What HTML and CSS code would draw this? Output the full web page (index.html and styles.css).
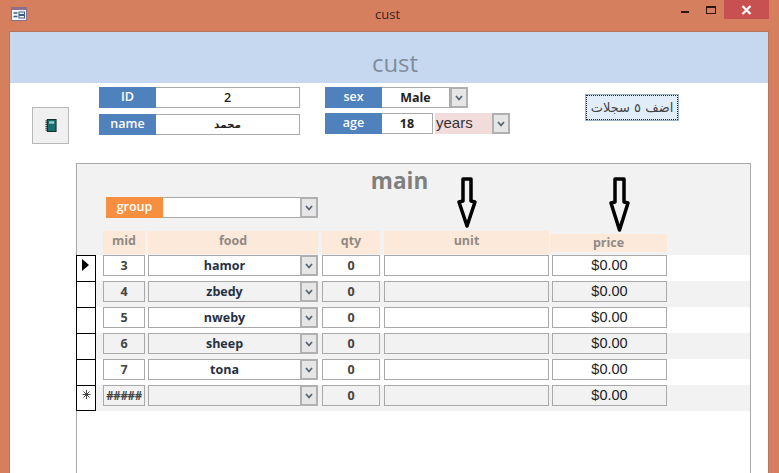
FILE: index.html
```html
<!DOCTYPE html>
<html lang="en">
<head>
<meta charset="utf-8">
<title>cust</title>
<link rel="stylesheet" href="styles.css">
</head>
<body>
<svg class="defs" width="0" height="0" aria-hidden="true">
  <symbol id="chev" viewBox="0 0 10 8"><path d="M2 2 5 5.500 8 2" fill="none" stroke="#566270" stroke-width="1.700"/></symbol>
</svg>
<div class="window">
  <div class="titlebar">
    <div class="title-left">
      <svg class="app-icon" width="16" height="14" viewBox="0 0 16 14">
        <rect x="0.5" y="0.5" width="15" height="13" fill="#f4f6fb" stroke="#8a6f86"/>
        <rect x="1" y="1" width="14" height="2" fill="#8f6f95"/>
        <path d="M2.5 6H6.5M2.5 9.5H6.5" stroke="#3c5d8f" stroke-width="1.3"/>
        <rect x="8" y="5" width="5.500" height="2.500" fill="none" stroke="#3c5d8f"/>
        <rect x="8" y="8.500" width="5.500" height="2.500" fill="none" stroke="#3c5d8f"/>
      </svg>
    </div>
    <div class="title-text">cust</div>
    <div class="title-right">
      <span class="ctl-min"></span>
      <span class="ctl-max"></span>
      <span class="ctl-close">
        <svg width="11" height="10" viewBox="0 0 11 10"><path d="M1.500 1 9.500 9M9.500 1 1.500 9" stroke="#fff" stroke-width="2.200"/></svg>
      </span>
    </div>
  </div>

  <div class="form">
    <div class="form-header">cust</div>
    <div class="form-top">
      <button class="icon-btn" type="button" aria-label="book">
        <svg width="12" height="13" viewBox="0 0 13 14">
          <rect x="2.500" y="0.500" width="9.500" height="13" fill="#17706e" stroke="#0d2326"/>
          <rect x="4.500" y="2.500" width="5.500" height="2.500" fill="#9fd0cc"/>
          <path d="M0.500 2H3M0.500 4H3M0.500 6H3M0.500 8H3M0.500 10H3M0.500 12H3" stroke="#222" stroke-width="1"/>
        </svg>
      </button>
      <div class="pair-col col-a">
        <div class="pair"><span class="lbl lbl-w">ID</span><span class="val val-id">2</span></div>
        <div class="pair"><span class="lbl lbl-w">name</span><span class="val val-id val-ar" dir="rtl">محمد</span></div>
      </div>
      <div class="pair-col col-b">
        <div class="pair">
          <span class="lbl lbl-w">sex</span>
          <span class="val val-sex">Male</span>
          <span class="chev-box"><svg width="10" height="8"><use href="#chev"/></svg></span>
        </div>
        <div class="pair">
          <span class="lbl lbl-w">age</span>
          <span class="val val-age">18</span>
          <span class="val-years">years</span>
          <span class="chev-box"><svg width="10" height="8"><use href="#chev"/></svg></span>
        </div>
      </div>
      <button class="action-btn" type="button" dir="rtl">اضف ٥ سجلات</button>
    </div>

    <div class="subform">
      <svg class="arrow arrow-a" width="24" height="56" viewBox="0 0 24 56">
        <path d="M8 4H16V26L20 27 12 51 4 27 8 26Z" fill="none" stroke="#000" stroke-width="3.500" stroke-linejoin="round"/>
      </svg>
      <svg class="arrow arrow-b" width="26" height="60" viewBox="0 0 26 60">
        <path d="M8 4H17V27L21 28 12.500 55 4 28 8 27Z" fill="none" stroke="#000" stroke-width="3.500" stroke-linejoin="round"/>
      </svg>
      <div class="sub-head">
        <div class="sub-title">main</div>
        <div class="group-row">
          <span class="group-lbl">group</span>
          <span class="group-val"></span>
          <span class="chev-box"><svg width="10" height="8"><use href="#chev"/></svg></span>
        </div>
        <div class="col-heads">
          <span class="spacer"></span>
          <span class="head c-mid">mid</span>
          <span class="head c-food">food</span>
          <span class="head c-qty">qty</span>
          <span class="head c-unit">unit</span>
          <span class="head c-price head-price">price</span>
        </div>
      </div>

      <div class="row">
        <span class="sel"><span class="tri"></span></span>
        <span class="cell c-mid">3</span>
        <span class="combo c-food"><span class="combo-text">hamor</span><span class="chev-box"><svg width="10" height="8"><use href="#chev"/></svg></span></span>
        <span class="cell c-qty">0</span>
        <span class="cell c-unit"></span>
        <span class="cell c-price money">$0.00</span>
      </div>
      <div class="row alt">
        <span class="sel"></span>
        <span class="cell c-mid">4</span>
        <span class="combo c-food"><span class="combo-text">zbedy</span><span class="chev-box"><svg width="10" height="8"><use href="#chev"/></svg></span></span>
        <span class="cell c-qty">0</span>
        <span class="cell c-unit"></span>
        <span class="cell c-price money">$0.00</span>
      </div>
      <div class="row">
        <span class="sel"></span>
        <span class="cell c-mid">5</span>
        <span class="combo c-food"><span class="combo-text">nweby</span><span class="chev-box"><svg width="10" height="8"><use href="#chev"/></svg></span></span>
        <span class="cell c-qty">0</span>
        <span class="cell c-unit"></span>
        <span class="cell c-price money">$0.00</span>
      </div>
      <div class="row alt">
        <span class="sel"></span>
        <span class="cell c-mid">6</span>
        <span class="combo c-food"><span class="combo-text">sheep</span><span class="chev-box"><svg width="10" height="8"><use href="#chev"/></svg></span></span>
        <span class="cell c-qty">0</span>
        <span class="cell c-unit"></span>
        <span class="cell c-price money">$0.00</span>
      </div>
      <div class="row">
        <span class="sel"></span>
        <span class="cell c-mid">7</span>
        <span class="combo c-food"><span class="combo-text">tona</span><span class="chev-box"><svg width="10" height="8"><use href="#chev"/></svg></span></span>
        <span class="cell c-qty">0</span>
        <span class="cell c-unit"></span>
        <span class="cell c-price money">$0.00</span>
      </div>
      <div class="row alt row-last">
        <span class="sel sel-last">
          <svg class="star" width="9" height="9" viewBox="0 0 9 9"><path d="M4.500 0V9M0.500 4.500H8.500M1.500 1.500 7.500 7.500M7.500 1.500 1.500 7.500" stroke="#333" stroke-width="0.900"/></svg>
        </span>
        <span class="cell c-mid hash">#####</span>
        <span class="combo c-food"><span class="combo-text"></span><span class="chev-box"><svg width="10" height="8"><use href="#chev"/></svg></span></span>
        <span class="cell c-qty">0</span>
        <span class="cell c-unit"></span>
        <span class="cell c-price money">$0.00</span>
      </div>
    </div>
  </div>
</div>
</body>
</html>
```
FILE: styles.css
```css
* { box-sizing: border-box; }
html, body { margin: 0; padding: 0; }
body {
  width: 779px;
  height: 473px;
  overflow: hidden;
  font-family: "Open Sans", "DejaVu Sans", sans-serif;
}
.defs { display: block; height: 0; }
.window {
  width: 779px;
  height: 473px;
  background: #d67f5f;
  display: flex;
  flex-direction: column;
  overflow: hidden;
}

/* title bar */
.titlebar {
  flex: 0 0 31px;
  display: grid;
  grid-template-columns: 1fr auto 1fr;
}
.title-left { padding: 7px 0 0 11px; }
.app-icon { display: block; }
.title-text {
  font-size: 13px;
  line-height: 17px;
  padding: 6px 4px 0 0;
  color: #38251e;
}
.title-right {
  display: flex;
  justify-content: flex-end;
  padding-right: 10px;
}
.ctl-min {
  width: 8px;
  height: 2px;
  background: #2d1710;
  margin: 11px 17px 0 0;
}
.ctl-max {
  width: 10px;
  height: 8px;
  border: 1px solid #2d1710;
  border-top-width: 2px;
  margin: 6px 8px 0 0;
}
.ctl-close {
  width: 45px;
  height: 19px;
  background: #c75050;
  display: flex;
  align-items: center;
  justify-content: center;
}

/* form */
.form {
  flex: 1;
  margin: 0 10px 0 9px;
  background: #fff;
  border: solid #b9745c;
  border-width: 1px 1px 0 1px;
  display: flex;
  flex-direction: column;
}
.form-header {
  flex: 0 0 51px;
  background: #c6d8ef;
  color: #7f8c9c;
  font-size: 24px;
  line-height: 33px;
  padding: 14px 0 0 12px;
  text-align: center;
}
.form-top {
  flex: 0 0 80px;
  display: flex;
  align-items: flex-start;
  padding: 4px 0 0 22px;
}
.icon-btn {
  width: 37px;
  height: 37px;
  margin: 20px 30px 0 0;
  padding: 0;
  background: #f0f0f0;
  border: 1px solid #b8b8b8;
  display: flex;
  align-items: center;
  justify-content: center;
}
.pair-col {
  display: flex;
  flex-direction: column;
}
.col-a { width: 201px; gap: 6px; margin-right: 25px; }
.col-b { width: 185px; gap: 5px; margin-right: 75px; }
.pair { display: flex; height: 21px; }
.lbl {
  background: #4f81bd;
  color: #fff;
  font-size: 12.5px;
  font-weight: 600;
  line-height: 20px;
  text-align: center;
  width: 57px;
  flex: none;
}
.val {
  border: 1px solid #a9a9a9;
  border-left: 0;
  background: #fff;
  color: #222;
  font-size: 12.5px;
  font-weight: 700;
  line-height: 19px;
  text-align: center;
}
.val-id { width: 144px; font-weight: 600; }
.val-ar { font-family: "DejaVu Sans", sans-serif; font-size: 10.5px; font-weight: 700; }
.val-sex { width: 68px; }
.val-age { width: 51px; }
.val-years {
  width: 57px;
  margin-left: 2px;
  background: #f2dcdb;
  color: #333;
  font-family: "Liberation Sans", sans-serif;
  font-size: 15px;
  line-height: 20px;
  padding-left: 1px;
}
.chev-box {
  width: 18px;
  height: 100%;
  flex: none;
  background: #e6e6e6;
  border: 2px solid #b0b0b0;
  display: flex;
  align-items: center;
  justify-content: center;
}
.action-btn {
  width: 94px;
  height: 27px;
  margin-top: 7px;
  padding: 0;
  background: #e1edf9;
  border: 1px solid #9db0c2;
  outline: 1px dotted #222;
  outline-offset: -2px;
  color: #444;
  font-family: "DejaVu Sans", sans-serif;
  font-size: 13px;
}

/* subform */
.subform {
  position: relative;
  flex: 1;
  margin: 0 17px 0 66px;
  background: #fff;
  border: solid #a9a9a9;
  border-width: 1px 1px 0 1px;
}
.arrow { position: absolute; top: 11px; }
.arrow-a { left: 378px; }
.arrow-b { left: 530px; }
.sub-head {
  height: 91px;
  background: #f2f2f2;
  display: flex;
  flex-direction: column;
}
.sub-title {
  height: 33px;
  padding-right: 28px;
  text-align: center;
  color: #7f7f7f;
  font-size: 22.5px;
  font-weight: 700;
  line-height: 33px;
}
.group-row {
  display: flex;
  height: 21px;
  margin-left: 29px;
}
.group-lbl {
  width: 57px;
  background: #f68f3f;
  color: #fff;
  font-size: 12.5px;
  font-weight: 600;
  line-height: 19px;
  text-align: center;
}
.group-val {
  width: 137px;
  background: #fff;
  border: solid #a9a9a9;
  border-width: 1px 0;
}
.col-heads {
  display: flex;
  height: 23px;
  margin-top: 13px;
}
.spacer { width: 19px; flex: none; }
.head {
  background: #fde9d9;
  color: #8f8a86;
  font-size: 12.5px;
  font-weight: 700;
  line-height: 19px;
  text-align: center;
}
.head-price {
  margin-top: 3px;
  height: 18px;
  line-height: 17px;
}
.c-mid { width: 42px; margin-left: 7px; flex: none; }
.c-food { width: 170px; margin-left: 3px; flex: none; }
.c-qty { width: 58px; margin-left: 4px; flex: none; }
.c-unit { width: 165px; margin-left: 4px; flex: none; }
.c-price { width: 115px; margin-left: 3px; flex: none; }
.head.c-price { width: 117px; margin-left: 1px; }

.row {
  display: flex;
  height: 26px;
  background: #fff;
}
.row.alt { background: #f2f2f2; }
.sel {
  flex: none;
  background: #fff;
  border-top: 1px solid #000;
  border-right: 1px solid #000;
  border-left: 1px solid #000;
  margin-left: -1px;
  width: 20px;
  display: flex;
  align-items: flex-start;
  justify-content: center;
}
.sel-last { border-bottom: 1px solid #000; }
.tri {
  width: 0;
  height: 0;
  margin: 3px 0 0 -1px;
  border-style: solid;
  border-width: 6px 0 6px 7px;
  border-color: transparent transparent transparent #000;
}
.star { margin-top: 4px; }
.cell, .combo {
  height: 21px;
  border: 1px solid #a9a9a9;
  background: transparent;
  color: #444;
  font-size: 12.5px;
  font-weight: 700;
  line-height: 19px;
  text-align: center;
}
.row:not(.alt) .cell, .row:not(.alt) .combo { background: #fff; }
.combo {
  display: flex;
  border-right: 0;
}
.combo-text { flex: 1; color: #263043; }
.combo .chev-box { margin-top: -1px; height: 21px; }
.money {
  color: #222;
  font-family: "Liberation Sans", sans-serif;
  font-size: 14.5px;
  font-weight: 400;
  line-height: 18px;
}
.hash { font-size: 11.5px; letter-spacing: -0.3px; color: #444; }
```
